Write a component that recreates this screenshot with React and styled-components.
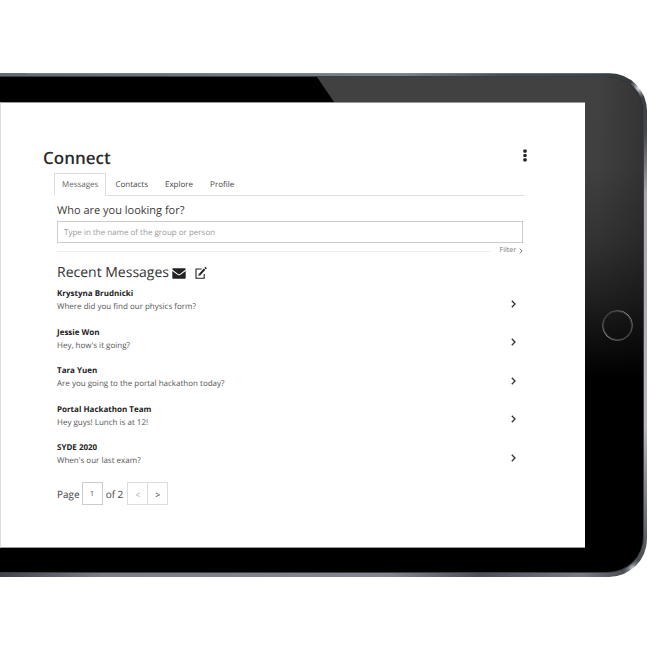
import React, { useState } from "react";
import styled, { createGlobalStyle } from "styled-components";

const GlobalStyle = createGlobalStyle`
  *, *::before, *::after { box-sizing: border-box; }
  body {
    margin: 0;
    background: #fff;
    color: #333;
    font-family: "Open Sans", "Noto Sans", sans-serif;
    font-size: 8px;
    text-rendering: geometricPrecision;
  }
  button, input { font: inherit; color: inherit; text-rendering: inherit; }
  h1, h2, h3, p, ul { margin: 0; padding: 0; }
`;

const Stage = styled.main`
  padding: 73px 1px 73px 0;
`;

const Rim = styled.div`
  padding: 4px 4px 5px 0;
  border-radius: 0 38px 38px 0;
  background:
    radial-gradient(circle at calc(100% - 8px) 15px, #e8eaee, rgba(170, 174, 180, 0.6) 5px, transparent 10px),
    radial-gradient(circle at calc(100% - 14px) calc(100% - 8px), #d4d6da, rgba(160, 164, 170, 0.5) 5px, transparent 10px),
    linear-gradient(#8b9092, transparent 1px) top / 92% 1px no-repeat,
    linear-gradient(90deg, #626b70, #7b8487 62%, #454e50 78%, #3e474a 90%, transparent 98%) top / 100% 6px no-repeat,
    linear-gradient(90deg, #40434a, #7d7d87 16%, #85868d 60%, #4b5057 74%, #777b82 90%, transparent 98%) bottom / 100% 6px no-repeat,
    linear-gradient(#30363a, #444a4f 12%, #aaa6ae 24%, #b9b5bd 70%, #6c7177 88%, #3c4146);
`;

const Bezel = styled.div`
  position: relative;
  isolation: isolate;
  padding: 25px 58px 24px 0;
  border-radius: 0 35px 35px 0;
  background: #000;
  box-shadow: 0 0 0 1px #3a3f43;
  overflow: hidden;
`;

const Glare = styled.div`
  position: absolute;
  z-index: -1;
  top: 0;
  right: 0;
  width: 326px;
  height: 300px;
  clip-path: polygon(0 0, 100% 0, 100% 100%, 204px 100%);
  background:
    linear-gradient(90deg, transparent 280px, rgba(0, 0, 0, 0.2)),
    linear-gradient(#414141 0, #404040 90px, #323232 165px, #202020 220px, #0c0c0c 270px, #000 300px);
`;

const HomeButton = styled.button`
  position: absolute;
  top: calc(50% - 15px);
  right: 10px;
  width: 31px;
  height: 31px;
  padding: 0;
  border: 0;
  background: none;
  svg { display: block; }
`;

const Screen = styled.div`
  min-height: 446px;
  padding: 43px 61px 41px 42px;
  border: 1px solid #999;
  border-left-color: #ddd;
  border-right: 0;
  background: #fff;
`;

const Header = styled.header`
  display: flex;
  justify-content: space-between;
  align-items: center;
  height: 24px;
`;

const Title = styled.h1`
  color: #2a2a2a;
  font-size: 17px;
  line-height: 24px;
  font-weight: 600;
`;

const MenuButton = styled.button`
  display: flex;
  width: 6px;
  height: 18px;
  padding: 0;
  margin-right: -4px;
  margin-bottom: 6px;
  border: 0;
  background: none;
  align-items: center;
  justify-content: center;
`;

const Tabs = styled.nav`
  display: flex;
  gap: 1px;
  margin: 3px 0 0 11px;
  height: 23px;
  border-bottom: 1px solid #ddd;
`;

const Tab = styled.button`
  height: 23px;
  padding: 1px 7px 0;
  border: 1px solid ${({ $active }) => ($active ? "#ddd" : "transparent")};
  border-bottom-color: ${({ $active }) => ($active ? "#fff" : "#ddd")};
  background: none;
  color: ${({ $active }) => ($active ? "#666" : "#444")};
  line-height: 20px;
`;

const Panel = styled.div`
  padding: 7px 1px 0 14px;
`;

const SearchLabel = styled.label`
  display: block;
  font-size: 11px;
  line-height: 16px;
  color: #3a3a3a;
`;

const SearchInput = styled.input`
  display: block;
  width: 100%;
  height: 22px;
  margin-top: 2px;
  padding: 0 6px;
  border: 1px solid #ccc;
  border-radius: 0;
  background: #fff;
  outline: none;
  &::placeholder { color: #999; opacity: 1; }
`;

const FilterRow = styled.div`
  display: flex;
  align-items: center;
  gap: 9px;
  height: 16px;
`;

const Divider = styled.hr`
  flex: 1;
  margin: 0;
  border: 0;
  border-top: 1px solid #eee;
`;

const FilterButton = styled.button`
  display: flex;
  align-items: center;
  gap: 3px;
  padding: 0;
  border: 0;
  background: none;
  color: #777;
  font-size: 7px;
  line-height: 12px;
`;

const SectionHeader = styled.div`
  display: flex;
  align-items: center;
  height: 20px;
  margin-top: 4px;
  gap: 3px;
`;

const SectionTitle = styled.h2`
  font-size: 14px;
  line-height: 20px;
  font-weight: 400;
  color: #333;
`;

const IconButton = styled.button`
  display: flex;
  padding: 0;
  margin-right: 6px;
  border: 0;
  background: none;
  color: #222;
`;

const MessageList = styled.ul`
  display: grid;
  align-content: space-between;
  min-height: 180px;
  margin-top: 4px;
  list-style: none;
`;

const MessageItem = styled.button`
  display: flex;
  justify-content: space-between;
  align-items: center;
  width: 100%;
  height: 26px;
  padding: 0 7px 0 0;
  border: 0;
  background: none;
  text-align: left;
`;

const MessageText = styled.span`
  display: grid;
`;

const Sender = styled.strong`
  color: #222;
  line-height: 13px;
`;

const Preview = styled.span`
  color: #555;
  line-height: 13px;
`;

const ChevronSlot = styled.span`
  display: flex;
  padding-top: 7px;
  color: #333;
`;

const Pagination = styled.div`
  display: flex;
  align-items: center;
  height: 23px;
  margin-top: 15px;
  font-size: 10px;
  color: #444;
`;

const PageInput = styled.input`
  width: 21px;
  height: 23px;
  margin: 0 3px 0 2px;
  padding: 2px 0 0;
  border: 1px solid #ccc;
  border-radius: 0;
  background: #fff;
  font-size: 7px;
  text-align: center;
  outline: none;
`;

const Pager = styled.div`
  display: flex;
  margin-left: 4px;
`;

const PagerButton = styled.button`
  width: 21px;
  height: 23px;
  padding: 3px 0 0;
  border: 1px solid #ddd;
  background: #fff;
  color: #333;
  font-size: 9px;
  line-height: 16px;
  & + & { margin-left: -1px; }
  &:disabled { color: #aaa; }
`;

const MESSAGES = [
  { sender: "Krystyna Brudnicki", preview: "Where did you find our physics form?" },
  { sender: "Jessie Won", preview: "Hey, how's it going?" },
  { sender: "Tara Yuen", preview: "Are you going to the portal hackathon today?" },
  { sender: "Portal Hackathon Team", preview: "Hey guys! Lunch is at 12!" },
  { sender: "SYDE 2020", preview: "When's our last exam?" },
];

const TABS = ["Messages", "Contacts", "Explore", "Profile"];

function Chevron({ width, height }) {
  return (
    <svg width={width} height={height} viewBox="0 0 5 8" fill="none" stroke="currentColor" strokeWidth="1.3" aria-hidden="true">
      <path d="M0.8 0.8 L4 4 L0.8 7.2" />
    </svg>
  );
}

function DotsIcon() {
  return (
    <svg width="4" height="13" viewBox="0 0 4 13" fill="#222" aria-hidden="true">
      <rect x="0.3" y="0.5" width="3.4" height="3.2" rx="1" />
      <rect x="0.3" y="4.9" width="3.4" height="3.2" rx="1" />
      <rect x="0.3" y="9.3" width="3.4" height="3.2" rx="1" />
    </svg>
  );
}

function EnvelopeIcon() {
  return (
    <svg width="14" height="11" viewBox="0 0 14 11" fill="currentColor" aria-hidden="true">
      <path d="M0.3 1.2 Q0.3 0.3 1.2 0.3 H12.8 Q13.7 0.3 13.7 1.2 V1.6 L8 6 Q7 6.7 6 6 L0.3 1.6Z" />
      <path d="M0.3 2.9 L5.5 6.8 Q7 7.8 8.5 6.8 L13.7 2.9 V9.7 Q13.7 10.7 12.8 10.7 H1.2 Q0.3 10.7 0.3 9.7Z" />
    </svg>
  );
}

function ComposeIcon() {
  return (
    <svg width="12" height="12" viewBox="0 0 12 12" fill="none" stroke="currentColor" aria-hidden="true">
      <path d="M6.6 2 H1 V11.2 H9.2 V7" strokeWidth="1.1" />
      <path d="M4.6 7.6 L9.6 2.1" strokeWidth="2.1" />
      <path d="M10.1 1.6 L11.2 0.5" strokeWidth="2.1" />
      <path d="M3.3 8.9 L3.9 6.6 L5.6 8.2Z" fill="currentColor" stroke="none" />
    </svg>
  );
}

function HomeRing() {
  return (
    <svg width="31" height="31" viewBox="0 0 31 31" fill="none" aria-hidden="true">
      <defs>
        <linearGradient id="ring" x1="0" y1="0" x2="1" y2="1">
          <stop offset="0" stopColor="#333436" />
          <stop offset="0.3" stopColor="#606268" />
          <stop offset="0.48" stopColor="#85878e" />
          <stop offset="0.75" stopColor="#5a5c62" />
          <stop offset="1" stopColor="#404148" />
        </linearGradient>
      </defs>
      <circle cx="15.5" cy="15.5" r="15" stroke="url(#ring)" strokeWidth="1" />
      <circle cx="15.5" cy="15.5" r="14.2" stroke="url(#ring)" strokeWidth="0.8" opacity="0.6" />
    </svg>
  );
}

export default function App() {
  const [tab, setTab] = useState("Messages");
  const [page, setPage] = useState("1");

  return (
    <>
      <GlobalStyle />
      <Stage>
        <Rim>
          <Bezel>
            <Glare />
            <Screen>
              <Header>
                <Title>Connect</Title>
                <MenuButton type="button" aria-label="More options">
                  <DotsIcon />
                </MenuButton>
              </Header>
              <Tabs aria-label="Connect sections">
                {TABS.map((name) => (
                  <Tab key={name} type="button" $active={name === tab} onClick={() => setTab(name)}>
                    {name}
                  </Tab>
                ))}
              </Tabs>
              <Panel>
                <SearchLabel htmlFor="search">Who are you looking for?</SearchLabel>
                <SearchInput id="search" type="text" placeholder="Type in the name of the group or person" />
                <FilterRow>
                  <Divider />
                  <FilterButton type="button">
                    Filter
                    <Chevron width={4} height={6} />
                  </FilterButton>
                </FilterRow>
                <SectionHeader>
                  <SectionTitle>Recent Messages</SectionTitle>
                  <IconButton type="button" aria-label="Inbox">
                    <EnvelopeIcon />
                  </IconButton>
                  <IconButton type="button" aria-label="Compose message">
                    <ComposeIcon />
                  </IconButton>
                </SectionHeader>
                <MessageList>
                  {MESSAGES.map(({ sender, preview }) => (
                    <li key={sender}>
                      <MessageItem type="button">
                        <MessageText>
                          <Sender>{sender}</Sender>
                          <Preview>{preview}</Preview>
                        </MessageText>
                        <ChevronSlot>
                          <Chevron width={5} height={8} />
                        </ChevronSlot>
                      </MessageItem>
                    </li>
                  ))}
                </MessageList>
                <Pagination>
                  <label htmlFor="page">Page</label>
                  <PageInput id="page" type="text" value={page} onChange={(e) => setPage(e.target.value)} />
                  <span>of 2</span>
                  <Pager>
                    <PagerButton type="button" aria-label="Previous page" disabled={page === "1"} onClick={() => setPage("1")}>
                      &lt;
                    </PagerButton>
                    <PagerButton type="button" aria-label="Next page" onClick={() => setPage("2")}>
                      &gt;
                    </PagerButton>
                  </Pager>
                </Pagination>
              </Panel>
            </Screen>
            <HomeButton type="button" aria-label="Home">
              <HomeRing />
            </HomeButton>
          </Bezel>
        </Rim>
      </Stage>
    </>
  );
}
